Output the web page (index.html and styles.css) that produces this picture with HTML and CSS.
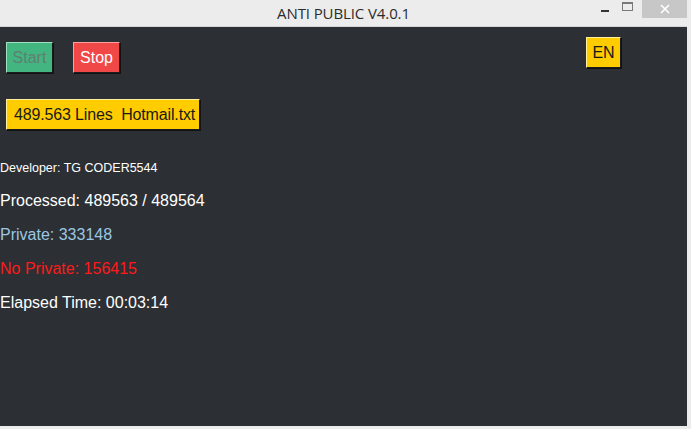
FILE: index.html
```html
<!DOCTYPE html>
<html lang="en">
<head>
    <meta charset="UTF-8">
    <title>ANTI PUBLIC V4.0.1</title>
    <link rel="stylesheet" href="styles.css">
</head>
<body>
    <div class="window">
        <div class="titlebar">
            <span class="title">ANTI PUBLIC V4.0.1</span>
            <div class="controls">
                <span class="ctrl minimize"><span class="dash"></span></span>
                <span class="ctrl maximize"><span class="box"></span></span>
                <span class="ctrl close">
                    <svg width="12" height="10" viewBox="0 0 12 10"><path d="M2 1 L10 9 M10 1 L2 9" stroke="#fff" stroke-width="1.6"/></svg>
                </span>
            </div>
        </div>
        <div class="content">
            <div class="top-row">
                <div class="actions">
                    <button class="btn btn-start" disabled>Start</button>
                    <button class="btn btn-stop">Stop</button>
                </div>
                <button class="btn btn-lang">EN</button>
            </div>
            <button class="btn btn-file">489.563 Lines&nbsp; Hotmail.txt</button>
            <div class="stats">
                <div class="dev">Developer: TG CODER5544</div>
                <div class="stat">Processed: 489563 / 489564</div>
                <div class="stat private">Private: 333148</div>
                <div class="stat no-private">No Private: 156415</div>
                <div class="stat">Elapsed Time: 00:03:14</div>
            </div>
        </div>
    </div>
</body>
</html>
```

FILE: styles.css
```css
html, body {
    margin: 0;
    padding: 0;
}
body {
    width: 691px;
    height: 429px;
    overflow: hidden;
    background-color: #ececec;
    font-family: 'Liberation Sans', Arial, sans-serif;
}
.window {
    display: flex;
    flex-direction: column;
    height: 426px;
    width: 687px;
}
.titlebar {
    height: 27px;
    position: relative;
    display: flex;
    justify-content: center;
    align-items: center;
    background-color: #ececec;
    border-bottom: 1px solid #d6d6d6;
    box-sizing: border-box;
}
.title {
    font-family: 'Open Sans', 'DejaVu Sans', sans-serif;
    font-size: 15px;
    color: #2b2b2b;
    letter-spacing: -0.1px;
    margin-top: -1px;
}
.controls {
    position: absolute;
    top: 0;
    right: 0;
    display: flex;
    height: 18px;
}
.ctrl {
    display: flex;
    align-items: center;
    justify-content: center;
}
.minimize {
    width: 26px;
}
.dash {
    width: 8px;
    height: 2px;
    background: #333;
    margin-top: 3px;
}
.maximize {
    width: 24px;
}
.box {
    width: 9px;
    height: 6px;
    border: 1px solid #7a7a7a;
    border-top-width: 2px;
    margin-top: -5px;
    margin-right: 6px;
}
.close {
    width: 45px;
    background-color: #c7c7c7;
}
.content {
    flex: 1;
    background-color: #2c2f33;
    padding: 15px 0 0 6px;
    display: flex;
    flex-direction: column;
    align-items: flex-start;
}
.top-row {
    width: 615px;
    display: flex;
    justify-content: space-between;
    align-items: flex-start;
}
.actions {
    display: flex;
    gap: 20px;
}
.btn {
    font-family: 'Liberation Sans', Arial, sans-serif;
    font-size: 16px;
    border: 1px solid;
    box-shadow: 1px 1px 0 #111;
    padding: 0 7px;
    height: 31px;
    line-height: 29px;
    margin: 0;
    white-space: nowrap;
    box-sizing: border-box;
}
.btn-start {
    width: 47px;
    padding: 0;
    background-color: #43b581;
    color: #5f8070;
    border-color: #9ee0c0 #1c1c1c #1c1c1c #9ee0c0;
}
.btn-stop {
    width: 47px;
    padding: 0;
    background-color: #f04747;
    color: #fff;
    border-color: #ffa0a0 #1c1c1c #1c1c1c #ffa0a0;
}
.btn-lang {
    width: 35px;
    padding: 0;
    margin-top: -5px;
    background-color: #ffcc00;
    color: #1a1a1a;
    border-color: #fff0a0 #1c1c1c #1c1c1c #fff0a0;
}
.btn-file {
    margin-top: 26px;
    width: 194px;
    padding: 0 0 0 7px;
    text-align: left;
    letter-spacing: -0.15px;
    background-color: #ffcc00;
    color: #1a1a1a;
    border-color: #fff0a0 #1c1c1c #1c1c1c #fff0a0;
}
.stats {
    margin-top: 26px;
    margin-left: -6px;
    color: #fff;
}
.dev {
    font-size: 12.5px;
    height: 24px;
    line-height: 24px;
    padding-bottom: 4px;
}
.stat {
    font-size: 16px;
    height: 34px;
    line-height: 34px;
}
.private {
    color: #99c7e3;
}
.no-private {
    color: #ff1a1a;
}
```
